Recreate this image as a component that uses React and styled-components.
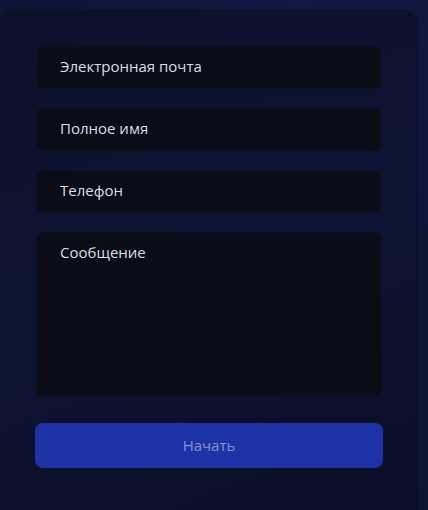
import React from "react";
import styled, { createGlobalStyle } from "styled-components";

const Global = createGlobalStyle`
  html, body { margin: 0; padding: 0; }
  body {
    background: radial-gradient(circle at 70% 10%, #111a45 0%, #0d1536 45%, #0b1230 100%);
    min-height: 510px;
    font-family: "Open Sans", "Noto Sans", sans-serif;
    overflow: hidden;
  }
`;

const Page = styled.div`
  padding: 9px 10px 0 0;
  height: 510px;
  box-sizing: border-box;
`;

const Card = styled.form`
  margin-left: -2px;
  height: 520px;
  box-sizing: border-box;
  padding: 37px 36px 0 38px;
  border-radius: 16px;
  background: linear-gradient(160deg, #0b1029 0%, #0c1232 50%, #0a0e26 100%);
  display: flex;
  flex-direction: column;
  gap: 19px;
`;

const Field = styled.input`
  height: 43px;
  box-sizing: border-box;
  border: 1px solid #0d1020;
  border-radius: 6px;
  background: #0a0c17;
  padding: 0 23px 3px;
  font-family: inherit;
  font-size: 15px;
  color: #e2e3ea;
  outline: none;
  &::placeholder { color: #dcdde5; }
`;

const Area = styled.textarea`
  height: 165px;
  box-sizing: border-box;
  border: 1px solid #0d1020;
  border-radius: 6px;
  background: #0a0c17;
  padding: 9px 23px;
  font-family: inherit;
  font-size: 15px;
  color: #e2e3ea;
  resize: none;
  outline: none;
  &::placeholder { color: #dcdde5; }
`;

const Submit = styled.button`
  margin-top: 7px;
  margin-left: -1px;
  margin-right: -1px;
  height: 45px;
  border: none;
  border-radius: 8px;
  background: #1e32a8;
  color: #8b93c9;
  font-family: inherit;
  font-size: 15px;
  padding-bottom: 3px;
  cursor: pointer;
`;

export default function App() {
  return (
    <>
      <Global />
      <Page>
        <Card onSubmit={(e) => e.preventDefault()}>
          <Field type="email" placeholder="Электронная почта" />
          <Field type="text" placeholder="Полное имя" />
          <Field type="tel" placeholder="Телефон" />
          <Area placeholder="Сообщение" />
          <Submit type="submit">Начать</Submit>
        </Card>
      </Page>
    </>
  );
}
